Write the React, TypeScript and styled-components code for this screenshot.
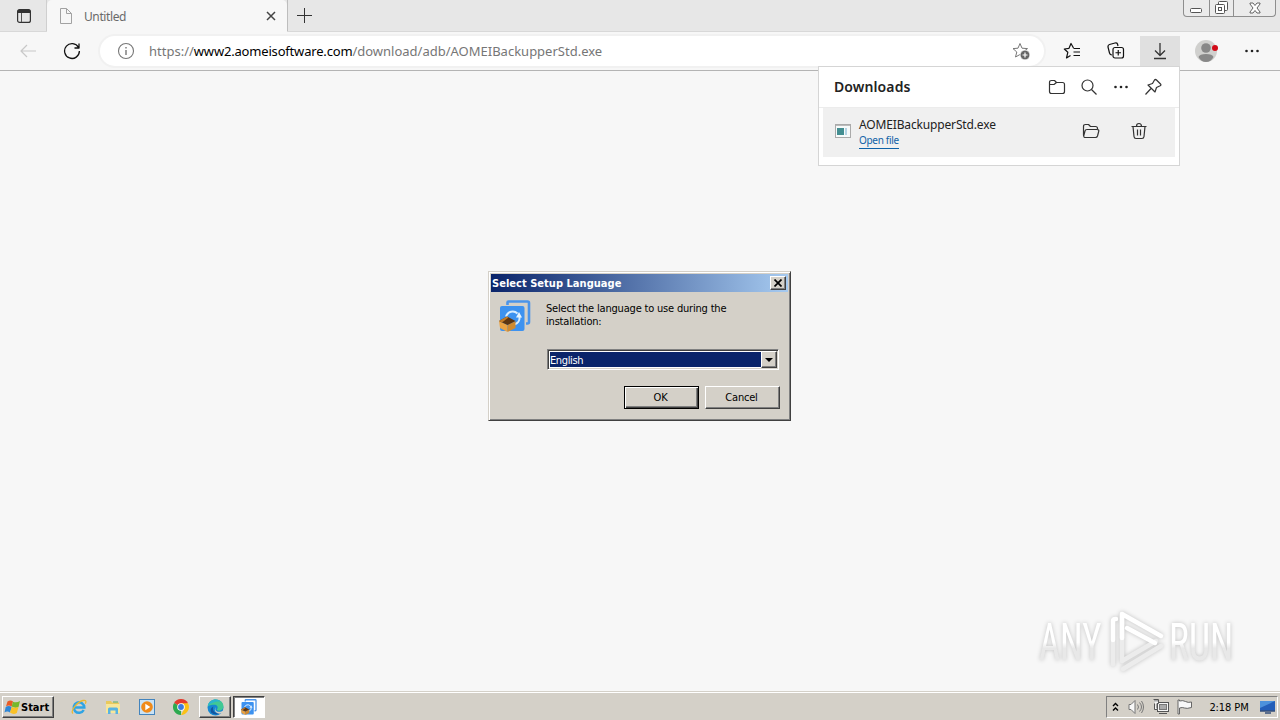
import React from 'react';
import styled, { createGlobalStyle, css } from 'styled-components';

const GlobalStyle = createGlobalStyle`
  * {
    box-sizing: border-box;
  }
  body {
    margin: 0;
    overflow: hidden;
    font-family: 'DejaVu Sans Condensed', 'DejaVu Sans', sans-serif;
    font-stretch: condensed;
    font-size: 11px;
    color: #000;
  }
  svg {
    display: block;
    flex: none;
  }
`;

const Screen = styled.div`
  position: relative;
  width: 1280px;
  height: 720px;
  display: flex;
  flex-direction: column;
  background: #f7f7f7;
  overflow: hidden;
`;

/* Browser */

const TabStrip = styled.div`
  height: 32px;
  display: flex;
  background: #e7e7e7;
  border-bottom: 1px solid #d8d8d8;
`;

const TabActions = styled.div`
  width: 47px;
  display: flex;
  align-items: center;
  justify-content: center;
  padding-left: 2px;
  border-right: 1px solid #cfcfcf;
`;

const Tab = styled.div`
  width: 240px;
  height: 32px;
  display: flex;
  align-items: center;
  padding: 0 10px 0 12px;
  background: #f7f7f7;
  border-radius: 5px 5px 0 0;
`;

const TabTitle = styled.span`
  flex: 1;
  margin-left: 11px;
  font: 12px 'Noto Sans', sans-serif;
  letter-spacing: -0.4px;
  color: #6a6a6a;
`;

const NewTab = styled.div`
  flex: 1;
  padding: 7px 0 0 8px;
  border-left: 1px solid #bdbdbd;
`;

const WindowControls = styled.div`
  width: 93px;
  height: 17px;
  margin-right: 4px;
  display: flex;
  border: 1px solid #8e8e8e;
  border-top: 0;
  border-radius: 0 0 4px 4px;
  background: #ebebeb;
`;

const WindowControl = styled.div<{ $width: number }>`
  width: ${(p) => p.$width}px;
  display: flex;
  align-items: center;
  justify-content: center;

  & + & {
    border-left: 1px solid #8e8e8e;
  }
`;

const Toolbar = styled.div`
  height: 39px;
  display: flex;
  align-items: center;
  border-bottom: 1px solid #b4b4b4;
`;

const ToolButton = styled.div<{ $width: number; $active?: boolean }>`
  width: ${(p) => p.$width}px;
  height: 30px;
  display: flex;
  align-items: center;
  justify-content: center;
  background: ${(p) => (p.$active ? '#e0e0e0' : 'transparent')};
`;

const AddressBar = styled.div`
  width: 944px;
  height: 30px;
  margin-right: 6px;
  padding: 0 14px 0 17px;
  display: flex;
  align-items: center;
  background: #fff;
  border-radius: 15px;
  box-shadow: 0 0 0 2px #f1f1f1;
`;

const Url = styled.div`
  flex: 1;
  margin-left: 14px;
  font: 13px 'Noto Sans', sans-serif;
  color: #767676;
  white-space: nowrap;
`;

const Host = styled.span`
  color: #000;
  letter-spacing: -0.18px;
`;

const Page = styled.div`
  flex: 1;
`;

/* Downloads flyout */

const Downloads = styled.div`
  position: absolute;
  left: 818px;
  top: 66px;
  width: 362px;
  height: 100px;
  background: #fff;
  border: 1px solid #d5d5d5;
`;

const DownloadsHeader = styled.div`
  height: 41px;
  padding: 0 17px 1px 15px;
  display: flex;
  align-items: center;
  gap: 14px;
  border-bottom: 1px solid #ececec;
`;

const DownloadsTitle = styled.div`
  flex: 1;
  font: 600 14px 'Noto Sans', sans-serif;
  letter-spacing: 0.1px;
  color: #222;
`;

const DownloadRow = styled.div`
  height: 49px;
  margin: 0 4px;
  padding: 0 27px 3px 12px;
  display: flex;
  align-items: center;
  background: #f0f0f0;
`;

const DownloadInfo = styled.div`
  flex: 1;
  display: flex;
  flex-direction: column;
  align-items: flex-start;
  margin: 4px 0 0 8px;
`;

const FileName = styled.span`
  font: 12px/16px 'Noto Sans', sans-serif;
  letter-spacing: -0.15px;
  color: #222;
`;

const OpenFile = styled.span`
  font: 10px/15px 'Noto Sans', sans-serif;
  letter-spacing: -0.32px;
  color: #0f62a8;
  border-bottom: 1px solid #0f62a8;
`;

const RowIcons = styled.div`
  display: flex;
  gap: 30px;
`;

/* Setup dialog */

const raised = css`
  border: 1px solid;
  border-color: #fff #404040 #404040 #fff;
  box-shadow: inset -1px -1px 0 #808080;
  background: #d4d0c8;
`;

const Dialog = styled.div`
  position: absolute;
  left: 488px;
  top: 271px;
  width: 303px;
  height: 150px;
  padding: 2px;
  background: #d4d0c8;
  border: 1px solid;
  border-color: #d4d0c8 #404040 #404040 #d4d0c8;
  box-shadow: inset 1px 1px 0 #fff, inset -1px -1px 0 #808080;
`;

const TitleBar = styled.div`
  height: 18px;
  padding: 0 2px 0 1px;
  display: flex;
  align-items: center;
  justify-content: space-between;
  color: #fff;
  font-weight: bold;
  letter-spacing: 0.03px;
  white-space: nowrap;
  background: linear-gradient(90deg, #0a246a, #a6caf0);
`;

const CloseButton = styled.div`
  ${raised}
  width: 16px;
  height: 14px;
  display: flex;
  align-items: center;
  justify-content: center;
`;

const DialogBody = styled.div`
  display: flex;
  gap: 15px;
  padding: 8px;
`;

const DialogIcon = styled.div`
  width: 32px;
`;

const DialogContent = styled.div`
  flex: 1;
`;

const Prompt = styled.div`
  height: 49px;
  padding-top: 2px;
  line-height: 13px;
  letter-spacing: -0.19px;
  white-space: nowrap;
`;

const Select = styled.div`
  width: 232px;
  height: 21px;
  margin-left: 1px;
  padding: 1px;
  display: flex;
  background: #fff;
  border: 1px solid;
  border-color: #808080 #fff #fff #808080;
  box-shadow: inset 1px 1px 0 #404040, inset -1px -1px 0 #d4d0c8;
`;

const SelectValue = styled.div`
  flex: 1;
  margin: 1px 0 1px 1px;
  line-height: 17px;
  letter-spacing: -0.38px;
  color: #fff;
  background: #0a246a;
`;

const SelectArrow = styled.div`
  ${raised}
  width: 16px;
  display: flex;
  align-items: center;
  justify-content: center;
`;

const Buttons = styled.div`
  display: flex;
  justify-content: flex-end;
  gap: 6px;
  margin-top: 16px;
`;

const DialogButton = styled.div<{ $default?: boolean }>`
  ${raised}
  width: 75px;
  height: 23px;
  padding-right: 2px;
  line-height: 21px;
  letter-spacing: -0.2px;
  text-align: center;
  ${(p) =>
    p.$default &&
    css`
      border-color: #000;
      box-shadow: inset 1px 1px 0 #fff, inset -1px -1px 0 #404040, inset -2px -2px 0 #808080;
    `}
`;

/* Taskbar */

const Taskbar = styled.div`
  height: 28px;
  display: flex;
  align-items: center;
  padding: 1px 2px 0;
  background: #d4d0c8;
  border-top: 1px solid #fff;
  box-shadow: 0 -1px 0 #d4d0c8;
`;

const StartButton = styled.div`
  ${raised}
  width: 52px;
  height: 22px;
  padding-left: 1px;
  display: flex;
  align-items: center;
  font-weight: bold;
`;

const QuickLaunch = styled.div`
  display: flex;
  gap: 18px;
  margin: 0 10px 0 17px;
`;

const TaskButton = styled.div<{ $pressed?: boolean }>`
  ${raised}
  width: 32px;
  height: 22px;
  margin-right: 2px;
  display: flex;
  align-items: center;
  justify-content: center;
  ${(p) =>
    p.$pressed &&
    css`
      background: #fff;
      border-color: #404040 #fff #fff #404040;
      box-shadow: inset 1px 1px 0 #808080;
    `}
`;

const Tray = styled.div`
  width: 172px;
  height: 22px;
  margin-left: auto;
  padding: 0 1px 0 5px;
  display: flex;
  align-items: center;
  border: 1px solid;
  border-color: #808080 #fff #fff #808080;
`;

const TrayIcons = styled.div`
  display: flex;
  align-items: center;
  gap: 8px;
`;

const Clock = styled.div`
  flex: 1;
  text-align: center;
  padding-left: 6px;
  letter-spacing: -0.1px;
  white-space: nowrap;
`;

const Watermark = styled.svg`
  position: absolute;
  left: 1030px;
  top: 602px;
  filter: drop-shadow(0 0 2px rgba(0, 0, 0, 0.22));
`;

type StrokeProps = {
  size?: number;
  color?: string;
  width?: number;
  children: React.ReactNode;
};

const Stroke = ({ size = 18, color = '#333', width = 1.2, children }: StrokeProps) => (
  <svg width={size} height={size} viewBox={`0 0 ${size} ${size}`} fill="none" stroke={color} strokeWidth={width} strokeLinejoin="round">
    {children}
  </svg>
);

const Dots = () => (
  <svg width="18" height="18" viewBox="0 0 18 18" fill="#222">
    <circle cx="3.5" cy="9" r="1.3" />
    <circle cx="9" cy="9" r="1.3" />
    <circle cx="14.5" cy="9" r="1.3" />
  </svg>
);

const AomeiIcon = ({ size }: { size: number }) => (
  <svg width={size} height={size} viewBox="0 0 32 32">
    <path d="M8.500 5V2.500q0-1 1-1h19q1.500 0 1.500 1.500v19q0 1.500-1.500 1.500H27" fill="none" stroke="#4a94ea" strokeWidth="2.600" />
    <rect x="1" y="6" width="24.500" height="25" rx="2" fill="#3d92f0" />
    <path d="M7 16.500a7 7 0 0 1 11.500-3M20.500 17a7 7 0 0 1-5 7.500" fill="none" stroke="#d9edff" strokeWidth="2" />
    <path d="M20 12l3 5.500h-6z" fill="#e8f5ff" />
    <path d="M0 21l8.500 4v7L1 28z" fill="#eaa243" />
    <path d="M8.500 25l8-4v7l-8 4z" fill="#d08a30" />
    <path d="M0 21l8-4.500 8.500 4.500-8 4z" fill="#5e3510" />
    <path d="M0 21l8-4.500 1.500 1L3 22.500z" fill="#c47a24" />
  </svg>
);

const StartLogo = () => (
  <svg width="17" height="17" viewBox="0 0 17 17">
    <path d="M3.500 2.500q3-2 5.500 0L7.700 7.500q-3-2-5.700 0z" fill="#e85b25" />
    <path d="M9 2.700q3.500 1.500 7-.7L14.500 8q-3.500 1.500-6.800-.5z" fill="#76b82c" />
    <path d="M1.700 8q3-2 6 0L6 13.500q-2.700-2-5.500 0z" fill="#2d86d6" />
    <path d="M7.700 8q3.500 1.500 6.800 0L12.800 14q-3.500 2-6.800-.5z" fill="#fac126" />
  </svg>
);

const IeIcon = () => (
  <svg width="16" height="16" viewBox="0 0 16 16" fill="none">
    <path d="M4 8.500h9.300A5.300 5.300 0 1 0 12.700 11" stroke="#2fa4e4" strokeWidth="2.500" />
    <path d="M2 14.500C-1 12 6 3 12 1.500c3-.8 3.500 1 2.300 3.200" stroke="#eab832" strokeWidth="1.300" />
  </svg>
);

const ExplorerIcon = () => (
  <svg width="16" height="16" viewBox="0 0 16 16">
    <path d="M1 2h5l1 1.500h7V14H1z" fill="#e9c95c" />
    <path d="M1 5h14v9H1z" fill="#f8e699" />
    <path d="M3 15v-5q0-1.500 1.500-1.500h7Q13 8.500 13 10v5h-2.500v-3.500h-5V15z" fill="#58b3e2" />
    <path d="M8 3h5" stroke="#5ab06a" />
  </svg>
);

const PlayerIcon = () => (
  <svg width="16" height="16" viewBox="0 0 16 16">
    <rect x=".5" y=".5" width="15" height="15" fill="#c9e2f5" stroke="#4384bd" />
    <circle cx="8" cy="8" r="5.8" fill="#f08a19" />
    <path d="M6.300 4.800v6.400L11.300 8z" fill="#fff" />
  </svg>
);

const ChromeIcon = () => (
  <svg width="16" height="16" viewBox="0 0 16 16">
    <path d="M8 8L1.070 4A8 8 0 0 1 14.930 4z" fill="#e33b2e" />
    <path d="M8 8v8A8 8 0 0 1 1.070 4z" fill="#2da94f" />
    <path d="M8 4.200h7A8 8 0 0 1 8 16l3.300-6z" fill="#fbc116" />
    <circle cx="8" cy="8" r="3.8" fill="#fff" />
    <circle cx="8" cy="8" r="2.9" fill="#3b7be0" />
  </svg>
);

const EdgeIcon = () => (
  <svg width="17" height="17" viewBox="0 0 16 16">
    <circle cx="8" cy="8" r="7.5" fill="#1688d2" />
    <path d="M.6 7C1.500 2.500 5 .5 8 .5c4.500 0 7.500 3 7.500 6.500 0 2.500-2 4-4 4-2.300 0-2.500-1-1.700-2 .7-1.200 0-3.500-3-3.500C4 5.500 1.500 6 .6 7z" fill="#42c994" />
    <path d="M.6 7C1.500 2.500 5 .5 8 .5c3 0 4 1 5 2C8 1.500 3 4 .6 7z" fill="#2bb5cf" />
    <path d="M6 7c-1.500 4 2 7.500 7.500 6A7.500 7.500 0 0 1 4 13C2.500 10 4 8 6 7z" fill="#1456a0" />
    <path d="M8.500 7.500c-1.500 2-.5 4.500 2.500 4.500 2.500 0 4-1 5-2v2l-2 1.500c-5 1.500-8.500-3-5.500-6z" fill="#d4d0c8" />
  </svg>
);

export default function App() {
  return (
    <>
      <GlobalStyle />
      <Screen>
        <TabStrip>
          <TabActions>
            <svg width="16" height="16" viewBox="0 0 16 16">
              <rect x="1.6" y="1.6" width="12.8" height="12.8" rx="2" fill="none" stroke="#333" strokeWidth="1.2" />
              <path d="M1.500 3.500q0-2 2-2h9q2 0 2 2V5h-13z" fill="#333" />
              <path d="M5.500 5v9" stroke="#555" />
            </svg>
          </TabActions>
          <Tab>
            <svg width="14" height="16" viewBox="0 0 14 16" fill="none" stroke="#a2a2a2">
              <path d="M1.500.5h6l5 5v10h-11zM7.500.5v5h5" />
            </svg>
            <TabTitle>Untitled</TabTitle>
            <Stroke size={12} width={1.5} color="#444"><path d="M2 2l8 8M10 2l-8 8" /></Stroke>
          </Tab>
          <NewTab>
            <Stroke size={16} width={1}><path d="M8.500 1v15M1 8.500h15" /></Stroke>
          </NewTab>
          <WindowControls>
            <WindowControl $width={25}>
              <svg width="13" height="14" viewBox="0 0 13 14"><rect x=".5" y="7.500" width="11" height="4" rx="1" fill="#fff" stroke="#555" /></svg>
            </WindowControl>
            <WindowControl $width={25}>
              <svg width="14" height="14" viewBox="0 0 14 14" fill="#fff" stroke="#555">
                <rect x="3.5" y=".5" width="9" height="9" rx="1" />
                <rect x=".5" y="3.5" width="9" height="9" rx="1" />
                <rect x="3.5" y="6.5" width="3" height="3" />
              </svg>
            </WindowControl>
            <WindowControl $width={42}>
              <svg width="12" height="12" viewBox="0 0 12 12" fill="#fff" stroke="#555" strokeWidth=".9">
                <path d="M1 1h3l2 2.500L8 1h3v1L8 6l3 4v1H8L6 8.500 4 11H1v-1l3-4-3-4z" />
              </svg>
            </WindowControl>
          </WindowControls>
        </TabStrip>

        <Toolbar>
          <ToolButton $width={56}>
            <Stroke size={18} color="#c8c8c8"><path d="M17 9H2M8 3L2 9l6 6" /></Stroke>
          </ToolButton>
          <ToolButton $width={32}>
            <Stroke size={18} color="#111" width={1.3}><path d="M15.500 5.500A7.400 7.400 0 1 0 16.400 9M16 1.500v4.500h-4.500" /></Stroke>
          </ToolButton>
          <ToolButton $width={12} />
          <AddressBar>
            <Stroke size={18} color="#777" width={1.1}>
              <circle cx="9" cy="9" r="7.5" />
              <path d="M9 8v5M9 5v1.500" strokeWidth="1.4" />
            </Stroke>
            <Url>
              https://<Host>www2.aomeisoftware.com</Host>/download/adb/AOMEIBackupperStd.exe
            </Url>
            <svg width="18" height="18" viewBox="0 0 18 18">
              <path d="M8 1.500l2 4.700 5.500.4L11 10l1 5-4-2.500L3.500 15l1.300-5L1 6.600l5-.4z" fill="none" stroke="#777" />
              <circle cx="13" cy="13" r="4.8" fill="#666" stroke="#fff" strokeWidth=".6" />
              <path d="M13 10.500v5M10.500 13h5" stroke="#fff" strokeWidth="1.2" />
            </svg>
          </AddressBar>
          <ToolButton $width={44}>
            <Stroke size={18} color="#111"><path d="M10.500 6L8 1.500 6 6.300 1.300 7l3.500 3.300L3.500 16l4-2.500M10.500 6.500H17M10.500 10H17M10.500 13.500H17" /></Stroke>
          </ToolButton>
          <ToolButton $width={44}>
            <Stroke size={18} color="#111">
              <path d="M5 13Q3 13 2.500 11L1 5q-.3-2 1.500-2.500L8 1q2-.4 2.500 1L11 4" />
              <rect x="6" y="5.5" width="10.5" height="10.5" rx="2" />
              <path d="M11.250 8v5.500M8.500 10.750H14" />
            </Stroke>
          </ToolButton>
          <ToolButton $width={2} />
          <ToolButton $width={40} $active>
            <Stroke size={18} color="#333" width={1.3}><path d="M9 1v12M4 8.500L9 13.500l5-5M3 16.500h12" /></Stroke>
          </ToolButton>
          <ToolButton $width={52}>
            <svg width="24" height="24" viewBox="0 0 24 24">
              <circle cx="12" cy="12" r="11" fill="#d0d0ce" />
              <circle cx="12" cy="9" r="4.8" fill="#888" />
              <path d="M4.500 18q1-3 7.500-3t7.500 3q-2.500 5-7.500 5t-7.500-5z" fill="#888" />
              <circle cx="21" cy="9" r="3" fill="#d20b19" />
            </svg>
          </ToolButton>
          <ToolButton $width={40}><Dots /></ToolButton>
        </Toolbar>
        <Page />

        <Taskbar>
          <StartButton><StartLogo />Start</StartButton>
          <QuickLaunch>
            <IeIcon />
            <ExplorerIcon />
            <PlayerIcon />
            <ChromeIcon />
          </QuickLaunch>
          <TaskButton><EdgeIcon /></TaskButton>
          <TaskButton $pressed><AomeiIcon size={16} /></TaskButton>
          <Tray>
            <TrayIcons>
              <svg width="7" height="10" viewBox="0 0 7 10" fill="none" stroke="#000" strokeWidth="1.400"><path d="M1 4l2.500-2.500L6 4M1 8.500L3.500 6 6 8.500" /></svg>
              <svg width="18" height="16" viewBox="0 0 18 16" fill="none" stroke="#777">
                <path d="M2 5.500h2l4-4v13l-4-4H2z" fill="#f8f8f8" />
                <path d="M10.500 5.500q2 2.500 0 5M12.500 3.500q4 4.500 0 9M14.500 2q4 6 0 12" />
              </svg>
              <svg width="16" height="16" viewBox="0 0 16 16" fill="#f5f5f5" stroke="#555">
                <rect x="4.5" y="3.5" width="11" height="9" />
                <rect x="6.5" y="5.5" width="7" height="5" fill="#aaa" stroke="#777" />
                <path d="M.5.5h5v4h-1.500v5M1.500 4.500v6h3M6 14.500h8M2 .5v2M4 .5v2" />
              </svg>
              <svg width="16" height="16" viewBox="0 0 16 16" fill="#f8f8f8" stroke="#666">
                <path d="M1 1v14h1.500V9q3-1 5 0t7-.5V3Q11 4 8.500 2.500T2.500 2V1z" />
              </svg>
            </TrayIcons>
            <Clock>2:18 PM</Clock>
            <svg width="17" height="16" viewBox="0 0 17 16">
              <path d="M1 2h15v10H1z" fill="#235eb9" />
              <path d="M1 2h15L1 9z" fill="#4c91dc" />
              <path d="M1 12h15M6 14h6" stroke="#364f7a" strokeWidth="1.3" />
            </svg>
          </Tray>
        </Taskbar>

        <Downloads>
          <DownloadsHeader>
            <DownloadsTitle>Downloads</DownloadsTitle>
            <Stroke><path d="M1.500 4.500q0-2 2-2h3l2 2h6q2 0 2 2v7q0 2-2 2h-11q-2 0-2-2zM1.500 6.500h4.500l2.500-2" /></Stroke>
            <Stroke><circle cx="7.5" cy="7.5" r="5.5" /><path d="M11.500 11.500l5 5" /></Stroke>
            <Dots />
            <Stroke><path d="M10.500 2q1-1 2 0l4 4q1 1-.3 1.700L12.500 9.500 11 14l-7-7 4.500-1.500zM7 10.500L1.500 16.500" /></Stroke>
          </DownloadsHeader>
          <DownloadRow>
            <svg width="16" height="14" viewBox="0 0 16 14">
              <rect x=".5" y=".5" width="15" height="13" fill="#f7fafa" stroke="#aaa" />
              <path d="M1 1.500h14" stroke="#bbb" />
              <path d="M2 4h7v7H2z" fill="#438e91" />
              <path d="M10 4h2v7h-2z" fill="#b4d4e4" />
            </svg>
            <DownloadInfo>
              <FileName>AOMEIBackupperStd.exe</FileName>
              <OpenFile>Open file</OpenFile>
            </DownloadInfo>
            <RowIcons>
              <Stroke><path d="M2 14.500q-.5-.5-.5-1.500V4.500q0-2 2-2h3l2 2h5q2 0 2 2V7M5 7.500h10q2.300 0 1.700 2L15.500 14q-.5 1.500-2 1.500H3.500q-2 0-1.700-1.800L3 9q.3-1.500 2-1.500z" /></Stroke>
              <Stroke><path d="M1.500 4.500h15M6.500 4.500q0-3 2.500-3t2.500 3M3 4.500l1 10q.2 2 2 2h6q1.800 0 2-2l1-10M7.500 7.500v6M10.500 7.500v6" /></Stroke>
            </RowIcons>
          </DownloadRow>
        </Downloads>

        <Dialog>
          <TitleBar>
            Select Setup Language
            <CloseButton>
              <svg width="8" height="8" viewBox="0 0 8 8" stroke="#000" strokeWidth="1.700"><path d="M.5.5l7 7M7.500.5l-7 7" /></svg>
            </CloseButton>
          </TitleBar>
          <DialogBody>
            <DialogIcon><AomeiIcon size={32} /></DialogIcon>
            <DialogContent>
              <Prompt>
                Select the language to use during the
                <br />
                installation:
              </Prompt>
              <Select>
                <SelectValue>English</SelectValue>
                <SelectArrow>
                  <svg width="8" height="4" viewBox="0 0 8 4"><path d="M0 0h8L4 4z" /></svg>
                </SelectArrow>
              </Select>
              <Buttons>
                <DialogButton $default>OK</DialogButton>
                <DialogButton>Cancel</DialogButton>
              </Buttons>
            </DialogContent>
          </DialogBody>
        </Dialog>

        <Watermark width="212" height="78" viewBox="0 0 212 78">
          <defs>
            <linearGradient id="fade" x1="0" y1="0" x2="0" y2="1">
              <stop offset=".5" stopColor="#fff" />
              <stop offset=".6" stopColor="#e8e8e8" />
            </linearGradient>
          </defs>
          <g fill="url(#fade)" fontFamily="Roboto" fontSize="51">
            <text transform="translate(9 58) scale(.6 1)" textLength="104" lengthAdjust="spacingAndGlyphs">ANY</text>
            <text transform="translate(139 58) scale(.6 1)" textLength="107" lengthAdjust="spacingAndGlyphs">RUN</text>
          </g>
          <g fill="none" strokeWidth="4.5" strokeLinejoin="round" strokeLinecap="round">
            <path d="M93 67l38-23" stroke="#ececec" />
            <path d="M92 12v47l34-20" stroke="#ececec" />
            <path d="M83 62V40" stroke="#ececec" />
            <path d="M83 38V19q0-2 3-2" stroke="#fff" />
            <path d="M92 36V12l39 22M97 26l28 15" stroke="#fff" />
          </g>
        </Watermark>
      </Screen>
    </>
  );
}
